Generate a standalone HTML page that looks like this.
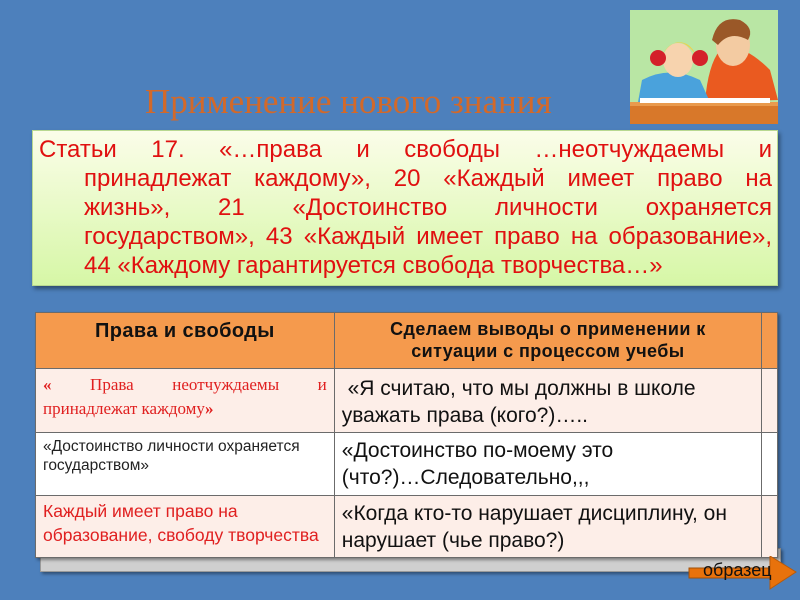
<!DOCTYPE html>
<html><head><meta charset="utf-8"><style>
body{margin:0;width:800px;height:600px;background:#4d80bc;position:relative;overflow:hidden;font-family:"Liberation Sans",sans-serif}
.title{position:absolute;left:145px;top:82px;font-family:"Liberation Serif",serif;font-size:35px;color:#d2692a;white-space:nowrap}
.box{position:absolute;left:32px;top:130px;width:746px;height:156px;background:linear-gradient(#fbfde9,#d6f7a6);border:1px solid #b8d890;box-shadow:2px 3px 4px rgba(0,0,0,.4);box-sizing:border-box}
.ln{position:absolute;color:#e01010;font-size:24px;line-height:29px;text-align:justify;text-align-last:justify;white-space:nowrap}
.ln.j{white-space:normal}
.shadow{position:absolute;left:40px;top:548px;width:739px;height:22px;background:#cfcfcf;border:1px solid #9a9a9a;box-shadow:2px 2px 3px rgba(0,0,0,.4)}
table{position:absolute;left:35px;top:312px;width:743px;border-collapse:collapse;box-shadow:2px 2px 3px rgba(0,0,0,.4)}
td{border:1px solid #6b6b6b;vertical-align:top;padding:3px 7px;box-sizing:border-box;white-space:nowrap}
tr.h td{background:#f59a4d;height:56px;font-weight:bold;font-size:18px;text-align:center;color:#111;letter-spacing:0.4px}
.r1 td,.r3 td{background:#fdeee8}
.r2 td{background:#fff}
td.c2{font-size:21px;line-height:27px;color:#111}
</style></head><body>
<div class="title">Применение нового знания</div>
<svg style="position:absolute;left:630px;top:10px" width="148" height="114" viewBox="0 0 148 114">
<rect width="148" height="114" fill="#b9e6a4"/>
<rect x="0" y="92" width="148" height="22" fill="#d8782a"/><rect x="0" y="92" width="148" height="4" fill="#e99a4d"/>
<path d="M90 40 Q110 30 140 60 L148 90 L75 92 Q78 55 90 40Z" fill="#ea5a20"/>
<ellipse cx="103" cy="35" rx="17" ry="21" fill="#f3cba2"/>
<path d="M82 30 Q88 5 110 10 Q125 18 118 30 Q100 20 88 35Z" fill="#9a5828"/>
<path d="M12 70 Q40 55 70 70 L80 92 L8 92Z" fill="#4aa2dc"/>
<ellipse cx="48" cy="50" rx="15" ry="17" fill="#f7d3ae"/>
<path d="M32 45 Q48 20 66 45 Q60 32 48 32 Q38 34 32 45Z" fill="#f2cf4a"/>
<circle cx="28" cy="48" r="8" fill="#d4202a"/><circle cx="70" cy="48" r="8" fill="#d4202a"/>
<rect x="10" y="88" width="130" height="5" fill="#fff"/>
</svg>
<div class="box">
<div class="ln j" style="left:6px;top:4px;width:733px">Статьи 17. «…права и свободы …неотчуждаемы и</div>
<div class="ln j" style="left:51px;top:33px;width:688px">принадлежат каждому», 20 «Каждый имеет право на</div>
<div class="ln j" style="left:51px;top:62px;width:688px">жизнь», 21 «Достоинство личности охраняется</div>
<div class="ln j" style="left:51px;top:91px;width:688px">государством», 43 «Каждый имеет право на образование»,</div>
<div class="ln" style="left:51px;top:120px;text-align-last:left">44 «Каждому гарантируется свобода творчества…»</div>
</div>
<div class="shadow"></div>
<table>
<tr class="h"><td style="width:299px;padding-top:7px;font-size:20px">Права и свободы</td><td style="width:428px;padding-top:5px;line-height:22px">Сделаем выводы о применении к<br>ситуации с процессом учебы</td><td style="width:16px"></td></tr>
<tr class="r1"><td style="height:62px;color:#e02020;font-family:'Liberation Serif',serif;font-size:17px;line-height:24px;padding-top:4px"><div style="text-align:justify;text-align-last:justify"><b>«</b> Права неотчуждаемы и</div>принадлежат каждому<b>»</b></td><td class="c2" style="padding-top:6px">&nbsp;«Я считаю, что мы должны в школе<br>уважать права (кого?)…..</td><td></td></tr>
<tr class="r2"><td style="height:63px;font-size:15.5px;line-height:19px;color:#222;padding-top:4px">«Достоинство личности охраняется<br>государством»</td><td class="c2" style="padding-top:4px">«Достоинство по-моему это<br>(что?)…Следовательно,,,</td><td></td></tr>
<tr class="r3"><td style="height:62px;font-size:17.5px;line-height:24px;color:#e02020;padding-top:3px">Каждый имеет право на<br>образование, свободу творчества</td><td class="c2" style="padding-top:4px">«Когда кто-то нарушает дисциплину, он<br>нарушает (чье право?)</td><td></td></tr>
</table>
<svg style="position:absolute;left:688px;top:556px" width="110" height="44"><rect x="1" y="12" width="90" height="10" fill="#e8720c" stroke="#a0500a"/><path d="M82 0 L108 16 L82 33Z" fill="#e8720c" stroke="#b85a0a"/></svg>
<div style="position:absolute;left:703px;top:560px;font-size:18px;color:#111">образец</div>
</body></html>
